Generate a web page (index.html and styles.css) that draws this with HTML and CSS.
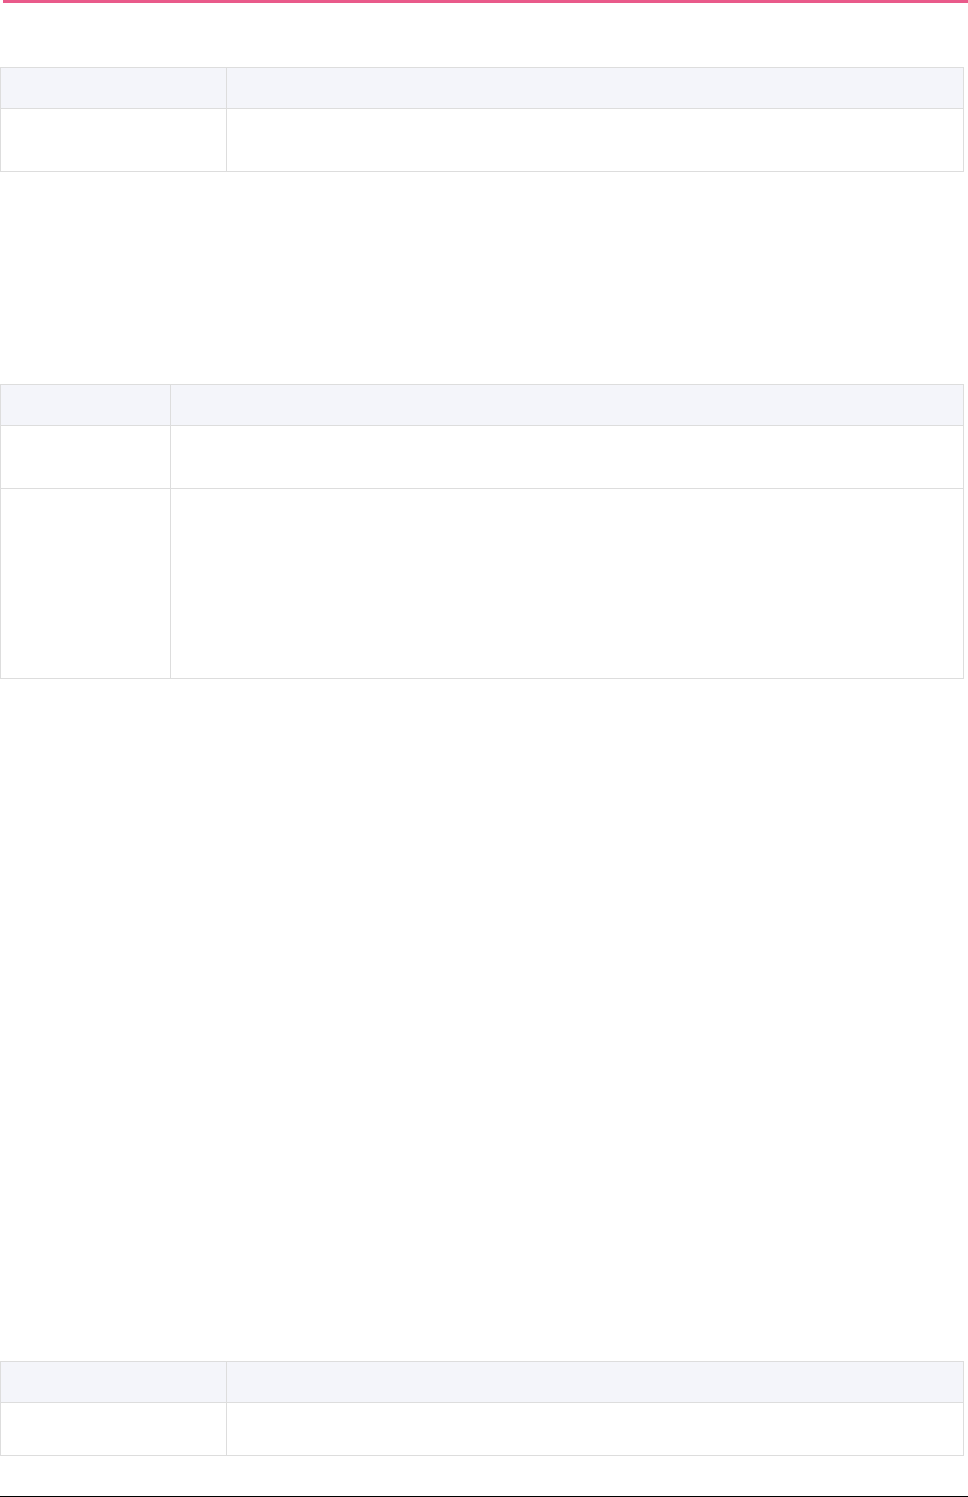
FILE: index.html
```html
<!DOCTYPE html>
<html>
<head>
<meta charset="utf-8">
<link rel="stylesheet" href="styles.css">
</head>
<body>
<div class="topbar"></div>
<main class="page">
  <table class="grid grid-a t1">
    <thead><tr class="head"><th></th><th></th></tr></thead>
    <tbody><tr class="row-62"><td></td><td></td></tr></tbody>
  </table>
  <table class="grid grid-b t2">
    <thead><tr class="head"><th></th><th></th></tr></thead>
    <tbody>
      <tr class="row-62"><td></td><td></td></tr>
      <tr class="row-189"><td></td><td></td></tr>
    </tbody>
  </table>
  <table class="grid grid-a t3">
    <thead><tr class="head"><th></th><th></th></tr></thead>
    <tbody><tr class="row-52"><td></td><td></td></tr></tbody>
  </table>
</main>
<div class="bottomline"></div>
</body>
</html>
```
FILE: styles.css
```css
html, body {
  margin: 0;
  padding: 0;
  background: #ffffff;
  font-family: "Liberation Sans", Arial, sans-serif;
}
.topbar {
  height: 3px;
  margin-left: 3px;
  background: #e95a8a;
}
.page {
  display: flex;
  flex-direction: column;
  height: 1493px;
  box-sizing: border-box;
}
.grid {
  width: 964px;
  border-collapse: collapse;
  table-layout: fixed;
}
.grid th, .grid td {
  border: 1px solid #dddddd;
  padding: 0;
}
.grid th {
  background: #f4f5fa;
}
.grid-a th:first-child { width: 225px; }
.grid-b th:first-child { width: 169px; }
.head { height: 41px; }
.row-62 { height: 63px; }
.row-189 { height: 190px; }
.row-52 { height: 53px; }
.t1 { margin-top: 64px; }
.t2 { margin-top: 212px; }
.t3 { margin-top: 682px; }
.bottomline {
  height: 1px;
  background: #000000;
}
```
